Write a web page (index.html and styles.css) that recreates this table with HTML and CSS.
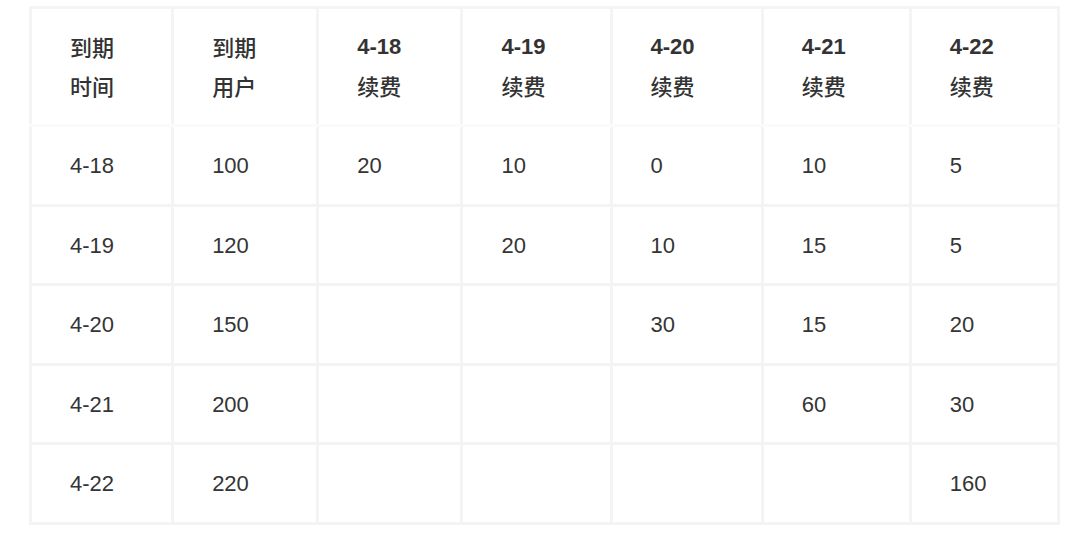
FILE: index.html
```html
<!DOCTYPE html>
<html lang="zh-CN">
<head>
<meta charset="utf-8">
<title>续费表</title>
<link rel="stylesheet" href="styles.css">
</head>
<body>
<table class="grid">
  <colgroup>
    <col class="c1"><col class="c2"><col class="c3"><col class="c4"><col class="c5"><col class="c6"><col class="c7">
  </colgroup>
  <thead>
    <tr class="head">
      <th><div class="cjk">到期</div><div class="cjk">时间</div></th>
      <th><div class="cjk">到期</div><div class="cjk">用户</div></th>
      <th><div class="lat">4-18</div><div class="cjk">续费</div></th>
      <th><div class="lat">4-19</div><div class="cjk">续费</div></th>
      <th><div class="lat">4-20</div><div class="cjk">续费</div></th>
      <th><div class="lat">4-21</div><div class="cjk">续费</div></th>
      <th><div class="lat">4-22</div><div class="cjk">续费</div></th>
    </tr>
  </thead>
  <tbody>
    <tr><td>4-18</td><td>100</td><td>20</td><td>10</td><td>0</td><td>10</td><td>5</td></tr>
    <tr><td>4-19</td><td>120</td><td></td><td>20</td><td>10</td><td>15</td><td>5</td></tr>
    <tr><td>4-20</td><td>150</td><td></td><td></td><td>30</td><td>15</td><td>20</td></tr>
    <tr><td>4-21</td><td>200</td><td></td><td></td><td></td><td>60</td><td>30</td></tr>
    <tr><td>4-22</td><td>220</td><td></td><td></td><td></td><td></td><td>160</td></tr>
  </tbody>
</table>
</body>
</html>
```

FILE: styles.css
```css
html, body {
  margin: 0;
  padding: 0;
  background: #ffffff;
}

body {
  font-family: "Liberation Sans", "Noto Sans CJK SC", sans-serif;
  font-size: 22px;
  color: #353535;
}

.grid {
  margin: 6px 0 0 29px;
  border-collapse: collapse;
  table-layout: fixed;
  width: 1031px;
}

.c1 { width: 142px; }
.c2 { width: 145px; }
.c3 { width: 144px; }
.c4 { width: 149px; }
.c5 { width: 151px; }
.c6 { width: 148px; }
.c7 { width: 148px; }

.grid th,
.grid td {
  border: 3px solid #f4f4f4;
  padding: 19px 36px 18.5px 38px;
  line-height: 39px;
  text-align: left;
  vertical-align: middle;
  white-space: nowrap;
}

.grid th {
  font-weight: 700;
  color: #333333;
  padding-top: 18px;
  padding-bottom: 19px;
  border-bottom-color: #fbfbfb;
}

.grid th .lat,
.grid th .cjk {
  height: 39px;
  line-height: 39px;
}

.grid th .cjk {
  font-family: "Noto Sans CJK SC", sans-serif;
  font-weight: 500;
}
```
